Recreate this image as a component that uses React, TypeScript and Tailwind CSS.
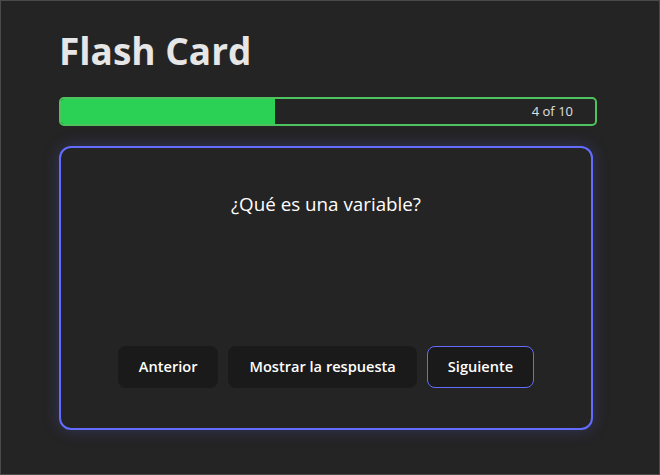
import React from 'react';

const progress = { current: 4, total: 10 };

export default function App() {
  const pct = (progress.current / progress.total) * 100;

  return (
    <div
      className="w-[660px] h-[475px] bg-[#242424] border border-[#4a4a4a] text-[#e4e4e4] overflow-hidden"
      style={{ fontFamily: '"Open Sans", "Noto Sans", sans-serif' }}
    >
      <div className="pl-[58px] pt-[24px]">
        <h1 className="text-[37px] font-bold leading-[52px] text-[#e6e6e6]">Flash Card</h1>

        {/* progress */}
        <div className="mt-[20px] w-[538px] h-[29px] border-2 border-[#4ec25c] rounded-[5px] relative overflow-hidden">
          <div className="h-full bg-[#2bd155]" style={{ width: `${pct}%` }} />
          <span className="absolute right-[22px] top-0 h-full flex items-center text-[13px] text-[#e0e0e0]">
            {progress.current} of {progress.total}
          </span>
        </div>

        {/* card */}
        <div className="mt-[20px] w-[534px] h-[284px] border-2 border-[#646cff] rounded-[12px] shadow-[0_0_16px_rgba(100,108,255,0.25)] flex flex-col items-center">
          <p className="mt-[42px] text-[18.8px] text-white">¿Qué es una variable?</p>
          <div className="mt-auto mb-[40px] flex gap-[10px] text-[14.6px] font-semibold text-white">
            <button className="h-[42px] px-[20px] rounded-[8px] bg-[#1a1a1a] border border-transparent">Anterior</button>
            <button className="h-[42px] px-[20px] rounded-[8px] bg-[#1a1a1a] border border-transparent">Mostrar la respuesta</button>
            <button className="h-[42px] px-[20px] rounded-[8px] bg-[#1a1a1a] border border-[#646cff]">Siguiente</button>
          </div>
        </div>
      </div>
    </div>
  );
}
